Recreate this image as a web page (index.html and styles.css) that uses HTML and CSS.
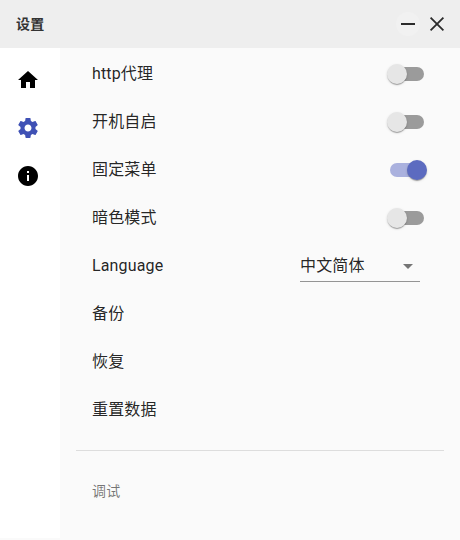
FILE: index.html
```html
<!DOCTYPE html>
<html lang="zh-CN">
<head>
<meta charset="utf-8">
<title>设置</title>
<link rel="stylesheet" href="styles.css">
</head>
<body>
<header class="titlebar">
  <h1 class="title">设置</h1>
  <button class="win-btn minimize" aria-label="最小化"><svg viewBox="0 0 24 24"><path d="M19 13H5v-2h14v2z"/></svg></button>
  <button class="win-btn" aria-label="关闭"><svg viewBox="0 0 24 24"><path d="M5.6 5.6l12.8 12.8M18.4 5.6L5.6 18.4" fill="none" stroke="currentColor" stroke-width="1.8"/></svg></button>
</header>
<div class="layout">
  <nav class="sidebar">
    <a class="nav-item"><svg viewBox="0 0 24 24"><path d="M10 20v-6h4v6h5v-8h3L12 3 2 12h3v8z"/></svg></a>
    <a class="nav-item active"><svg viewBox="0 0 24 24"><path d="M19.43 12.98c.04-.32.07-.64.07-.98s-.03-.66-.07-.98l2.11-1.65c.19-.15.24-.42.12-.64l-2-3.46c-.12-.22-.39-.3-.61-.22l-2.49 1c-.52-.4-1.08-.73-1.69-.98l-.38-2.65C14.46 2.18 14.25 2 14 2h-4c-.25 0-.46.18-.49.42l-.38 2.65c-.61.25-1.17.59-1.69.98l-2.49-1c-.23-.09-.49 0-.61.22l-2 3.46c-.13.22-.07.49.12.64l2.11 1.65c-.04.32-.07.65-.07.98s.03.66.07.98l-2.11 1.65c-.19.15-.24.42-.12.64l2 3.46c.12.22.39.3.61.22l2.49-1c.52.4 1.08.73 1.69.98l.38 2.65c.03.24.24.42.49.42h4c.25 0 .46-.18.49-.42l.38-2.65c.61-.25 1.17-.59 1.69-.98l2.49 1c.23.09.49 0 .61-.22l2-3.46c.12-.22.07-.49-.12-.64l-2.11-1.65zM12 15.5c-1.93 0-3.5-1.57-3.5-3.5s1.57-3.5 3.5-3.5 3.5 1.57 3.5 3.5-1.57 3.5-3.5 3.5z"/></svg></a>
    <a class="nav-item"><svg viewBox="0 0 24 24"><path d="M12 2C6.48 2 2 6.48 2 12s4.48 10 10 10 10-4.48 10-10S17.52 2 12 2zm1 15h-2v-6h2v6zm0-8h-2V7h2v2z"/></svg></a>
  </nav>
  <main class="content">
    <div class="row"><span>http代理</span><span class="switch"><span class="thumb"></span></span></div>
    <div class="row"><span>开机自启</span><span class="switch"><span class="thumb"></span></span></div>
    <div class="row"><span>固定菜单</span><span class="switch on"><span class="thumb"></span></span></div>
    <div class="row"><span>暗色模式</span><span class="switch"><span class="thumb"></span></span></div>
    <div class="row"><span>Language</span><span class="select">中文简体<span class="arrow"></span></span></div>
    <div class="row">备份</div>
    <div class="row">恢复</div>
    <div class="row">重置数据</div>
    <hr class="divider">
    <h2 class="subheader">调试</h2>
  </main>
</div>
</body>
</html>
```
FILE: styles.css
```css
* { box-sizing: border-box; }
body {
  margin: 0;
  height: 540px;
  overflow: hidden;
  display: flex;
  flex-direction: column;
  background: #fafafa;
  color: rgba(0, 0, 0, .87);
  font: 16px/24px Roboto, "Noto Sans CJK SC", sans-serif;
  letter-spacing: .00938em;
}
svg { display: block; width: 24px; height: 24px; fill: currentColor; }
.titlebar {
  display: flex;
  align-items: center;
  flex: 0 0 48px;
  padding: 0 11px 0 16px;
  background: #eee;
}
.title { flex: 1; margin: 0; font-size: 14px; font-weight: 700; color: #333; }
.win-btn { padding: 0; border: 0; border-radius: 50%; background: none; color: #2b2b2b; }
.minimize { margin-right: 5px; background: #f1f1f1; }
.layout { display: flex; flex: 1; }
.sidebar { width: 60px; height: 490px; padding-top: 8px; background: #fff; }
.nav-item { display: flex; align-items: center; height: 48px; padding-left: 16px; color: #000; }
.nav-item.active { color: #3f51b5; }
.content { flex: 1; padding: 2px 16px 0; }
.row {
  display: flex;
  align-items: center;
  justify-content: space-between;
  height: 48px;
  padding: 0 20px 0 16px;
}
.switch {
  display: flex;
  align-items: center;
  width: 34px;
  height: 14px;
  border-radius: 7px;
  background: #9b9b9b;
}
.thumb {
  flex: none;
  width: 20px;
  height: 20px;
  margin-left: -3px;
  border-radius: 50%;
  background: #e6e6e6;
  box-shadow: 0 2px 1px -1px rgba(0,0,0,.2), 0 1px 1px rgba(0,0,0,.14), 0 1px 3px rgba(0,0,0,.12);
}
.on { background: #aab1de; }
.on .thumb { margin-left: 17px; background: #5c6bc0; }
.select {
  display: flex;
  align-items: center;
  justify-content: space-between;
  width: 120px;
  height: 32px;
  margin-right: 4px;
  padding-right: 7px;
  border-bottom: 1px solid #949494;
}
.arrow { margin-top: 2px; border: 5px solid transparent; border-top-color: #757575; border-bottom: 0; }
.divider { width: 100%; height: 1px; margin: 16px 0 0; border: 0; background: #ddd; }
.subheader { margin: 16px 16px 0; font-size: 14px; line-height: 48px; font-weight: 400; color: rgba(0,0,0,.54); }
```
